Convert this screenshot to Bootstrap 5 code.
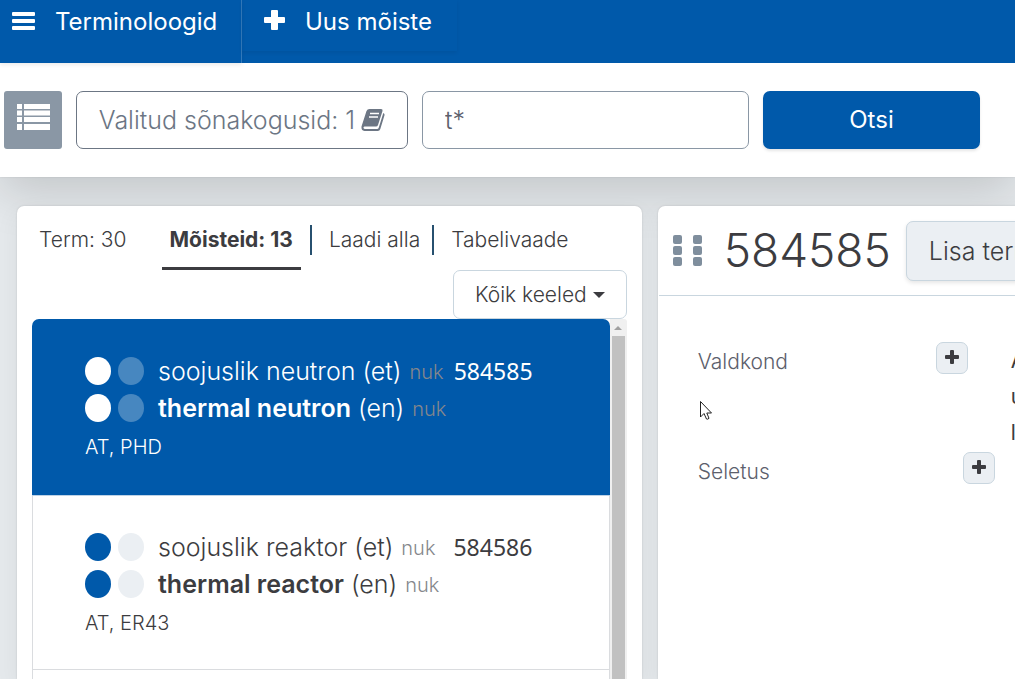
<!DOCTYPE html>
<html lang="et">
<head>
<meta charset="utf-8">
<meta name="viewport" content="width=device-width, initial-scale=1">
<title>Terminoloogid</title>
<link rel="stylesheet" href="https://cdn.jsdelivr.net/npm/bootstrap@5.3.0/dist/css/bootstrap.min.css">
<style>
  :root { --brand: #0059aa; --ink: #3c3c40; --soft: #ebeff3; --line: #c9d6df; }
  body { font-family: Inter, "Liberation Sans", sans-serif; font-weight: 300; font-size: 24px; line-height: 36px; color: var(--ink); background: #e5e9ec; }
  svg { display: block; flex: none; }
  .topbar { background: var(--brand); height: 63px; position: relative; z-index: 3; }
  .topbar a { color: #fff; text-decoration: none; font-weight: 400; height: 100%; padding-top: 4px; }
  .brand-link { width: 242px; padding-left: 12px; gap: 20px; border-right: 1px solid #3279bb; box-shadow: 0 2px 4px rgba(0,0,0,.08); }
  .topbar .new-link { height: 51px; width: 215px; padding-left: 22px; gap: 20px; box-shadow: 0 2px 4px rgba(0,0,0,.07); }
  .search { display: grid; grid-template-columns: 58px 332fr 327fr 217fr; gap: 14px; padding: 28px 35px 28px 4px; background: #fff; position: relative; z-index: 1; box-shadow: 0 16px 48px rgba(0,0,0,.15), 0 0 2px rgba(0,0,0,.1); }
  .search > * { height: 58px; }
  .list-btn { background: #8a97a5; border: 0; border-radius: 3px; padding: 0; }
  .btn { font-size: inherit; line-height: inherit; font-weight: 300; }
  .pick { border: 1px solid #6c7684; border-radius: 7px; color: #6c7684; font-size: 25px; gap: 6px; }
  .query { border: 1px solid #8a97a5; border-radius: 7px; font-size: 25px; font-weight: 300; color: #5c606c; padding: 0 22px; }
  .go, .go:hover { background: var(--brand); color: #fff; border-radius: 7px; font-weight: 400; box-shadow: 0 2px 3px rgba(0,0,0,.1); }
  .work { padding: 29px 0 0 17px; gap: 16px; position: relative; z-index: 2; }
  .panel { background: #fff; border-radius: 7px 7px 0 0; box-shadow: 0 0 2px rgba(0,0,0,.15), 0 8px 24px rgba(0,0,0,.06); }
  .results { flex: 0 0 62.6%; padding: 0 15px; }
  .tabs { font-size: 21px; height: 64px; padding-left: 7px; }
  .tabs a { color: var(--ink); text-decoration: none; line-height: 60px; padding-top: 4px; }
  .tabs .tab-on { font-weight: 700; border-bottom: 3px solid var(--ink); padding: 4px 8px 0 8px; margin: 0 9px 0 35px; }
  .tabs .tab-on { line-height: 59px; }
  .rule { width: 2px; height: 30px; background: #27506f; margin-top: 19px; }
  .tab-next { margin-left: 17px; }
  .rule-next { margin-left: 12px; }
  .langs { font-size: 21px; height: 49px; border: 1px solid var(--line); border-radius: 7px; padding: 0 21px; color: var(--ink); }
  .langs.dropdown-toggle::after { border-width: 6px 6px 0; margin-left: 6px; vertical-align: 4px; }
  .entries { border-radius: 7px 7px 0 0; overflow: hidden; }
  .entry { height: 174px; padding: 33px 52px 0; border: solid #dadcdf; border-width: 0 1px 1px; }
  .entry-rest { border-bottom: 0; }
  .entry-on { height: 177px; padding-top: 34px; border-width: 0 0 1px; padding-left: 53px; background: var(--brand); color: #fff; border-color: #bdd2e6; }
  .entry b { font-weight: 600; }
  .entry .line { height: 37px; gap: 8px; font-size: 25px; }
  .dot { width: 26px; height: 28px; border-radius: 50%; background: var(--brand); margin-top: 4px; flex: none; }
  .dot + .dot { background: var(--soft); margin-left: -1px; margin-right: 6px; }
  .entry-on .dot { background: #fff; }
  .entry-on .dot + .dot { background: #4787c0; }
  .domain { font-size: 20px; line-height: 38px; color: #85878c; }
  .num { font-family: "Noto Sans", sans-serif; font-size: 23px; font-weight: 400; margin-left: 2px; }
  .num-b { margin-left: 10px; }
  .sets { font-size: 20px; line-height: 40px; }
  .bar { width: 17px; background: #f0f0f0; padding: 0 2px; border-radius: 0 3px 0 0; }
  .bar svg { margin: 6px auto 6px; }
  .thumb { background: #c1c1c1; }
  .detail { flex: 0 0 70%; }
  .detail-head { height: 90px; border-bottom: 1px solid var(--line); padding: 0 14px; margin-left: 1px; }
  .detail-head h1 { font-size: 46px; line-height: 60px; font-weight: 300; margin: 0 15px 1px 22px; }
  .grey-btn, .grey-btn:hover { background: var(--soft); border: 1px solid var(--line); border-radius: 7px; color: var(--ink); }
  .add-term { height: 60px; padding: 0 22px; font-size: 25px; box-shadow: 0 2px 4px rgba(0,0,0,.1); }
  .plus-btn { width: 32px; height: 32px; padding: 0 0 2px; }
  .fields { font-size: 21px; color: #5c606c; padding: 46px 0 0 40px; }
  .pair { width: 270px; height: 32px; }
  .pair > span { padding-top: 7px; }
  .pair-wide { width: 297px; }
  .value { color: var(--ink); margin-left: 43px; height: 110px; padding-top: 1px; font-weight: 400; }
  .pointer { position: absolute; left: 700px; top: 401px; z-index: 5; }
</style>
</head>
<body class="vh-100 overflow-hidden d-flex flex-column">
<nav class="topbar d-flex">
  <a href="#" class="brand-link d-flex align-items-start">
    <svg width="23" height="36" viewBox="0 0 23 36" fill="#fff"><rect y="8" width="23" height="4" rx="1"/><rect y="15" width="23" height="4" rx="1"/><rect y="22" width="23" height="4" rx="1"/></svg>
    <span>Terminoloogid</span></a>
  <a href="#" class="new-link d-flex align-items-start">
    <svg width="21" height="36" viewBox="0 0 21 36" fill="#fff"><rect y="13" width="21" height="6" rx="1"/><rect x="7" y="6" width="7" height="20" rx="1"/></svg>
    <span>Uus mõiste</span></a>
</nav>
<form class="search" onsubmit="return false">
  <button type="button" class="list-btn d-flex justify-content-center" aria-label="Nimekiri">
    <svg class="mt-2" width="33" height="40" viewBox="0 0 33 40" fill="#fff"><path d="M0 5h5v5H0zM7 5h26v5H7zM0 11.500h5v5H0zM7 11.500h26v5H7zM0 18h5v5H0zM7 18h26v5H7zM0 25h5v6H0zM7 25h26v6H7z"/></svg>
  </button>
  <button type="button" class="btn pick d-flex align-items-center justify-content-center">
    <span>Valitud sõnakogusid: 1</span>
    <svg width="24" height="24" viewBox="0 0 24 24"><path fill="#6c7684" d="M8.500 1H20q2 0 1.500 2l-4.500 14q-.5 1.500-2 1.500H3.500q-1.300 0-1 1.500.4 1 1.500 1h12q1.300 0 1.800-1.500L22.300 5q1.700.8 1.200 2.200L19.300 21q-.6 2-2.500 2H3.500Q0 22.500.5 18.500L5.500 3q.8-2 3-2z"/><path d="M9 5.500h9M8 9h9" stroke="#fff" stroke-width="1.500"/></svg>
  </button>
  <input class="query w-100" type="text" value="t*" aria-label="Otsing">
  <button type="submit" class="btn go border-0">Otsi</button>
</form>
<main class="work d-flex flex-fill overflow-hidden">
  <section class="panel results d-flex flex-column">
    <div class="tabs d-flex">
      <a href="#">Term: 30</a><a href="#" class="tab-on">Mõisteid: 13</a><span class="rule"></span>
      <a href="#" class="tab-next">Laadi alla</a><span class="rule rule-next"></span><a href="#" class="tab-next">Tabelivaade</a>
    </div>
    <div class="d-flex justify-content-end"><button type="button" class="btn langs dropdown-toggle">Kõik keeled</button></div>
    <div class="d-flex flex-fill">
      <div class="entries d-flex flex-column flex-fill">
        <article class="entry entry-on">
          <div class="line d-flex"><span class="dot"></span><span class="dot"></span><span>soojuslik neutron (et)</span><span class="domain">nuk</span><span class="num">584585</span></div>
          <div class="line d-flex"><span class="dot"></span><span class="dot"></span><span><b>thermal neutron</b> (en)</span><span class="domain">nuk</span></div>
          <div class="sets">AT, PHD</div>
        </article>
        <article class="entry">
          <div class="line d-flex"><span class="dot"></span><span class="dot"></span><span>soojuslik reaktor (et)</span><span class="domain">nuk</span><span class="num num-b">584586</span></div>
          <div class="line d-flex"><span class="dot"></span><span class="dot"></span><span><b>thermal reactor</b> (en)</span><span class="domain">nuk</span></div>
          <div class="sets">AT, ER43</div>
        </article>
        <div class="entry entry-rest p-0 h-auto flex-fill"></div>
      </div>
      <div class="bar d-flex flex-column"><svg width="8" height="5" viewBox="0 0 8 5"><path d="M0 5l4-4 4 4z" fill="#a0a0a0"/></svg><div class="thumb flex-fill"></div></div>
    </div>
  </section>
  <section class="panel detail">
    <header class="detail-head d-flex align-items-center">
      <svg width="29" height="32" viewBox="0 0 29 32" fill="#7f8e9d"><rect width="9" height="9" rx="2"/><rect x="20" width="9" height="9" rx="2"/><rect y="11" width="9" height="9" rx="2"/><rect x="20" y="11" width="9" height="9" rx="2"/><rect y="22" width="9" height="9" rx="2"/><rect x="20" y="22" width="9" height="9" rx="2"/></svg>
      <h1>584585</h1>
      <button type="button" class="btn grey-btn add-term text-nowrap">Lisa termin</button>
    </header>
    <div class="fields">
      <div class="d-flex">
        <div class="pair d-flex justify-content-between align-items-center"><span>Valdkond</span>
          <button type="button" class="btn grey-btn plus-btn d-flex align-items-center justify-content-center" aria-label="Lisa valdkond"><svg width="14" height="14" viewBox="0 0 14 14" fill="#3c3c40"><rect y="5" width="14" height="4" rx="1"/><rect x="5" width="4" height="14" rx="1"/></svg></button></div>
        <div class="value">A<br>u<br>l</div>
      </div>
      <div class="pair pair-wide d-flex justify-content-between align-items-center"><span>Seletus</span>
        <button type="button" class="btn grey-btn plus-btn d-flex align-items-center justify-content-center" aria-label="Lisa seletus"><svg width="14" height="14" viewBox="0 0 14 14" fill="#3c3c40"><rect y="5" width="14" height="4" rx="1"/><rect x="5" width="4" height="14" rx="1"/></svg></button></div>
    </div>
  </section>
</main>
<svg class="pointer" width="13" height="20" viewBox="0 0 13 20"><path d="M.5.500V16l3.500-3.500 2.500 5.500q1 .7 2.500-.700L6.800 12h4.700z" fill="#fff" stroke="#222" stroke-width="1"/></svg>
<script src="https://cdn.jsdelivr.net/npm/bootstrap@5.3.0/dist/js/bootstrap.bundle.min.js"></script>
</body>
</html>
